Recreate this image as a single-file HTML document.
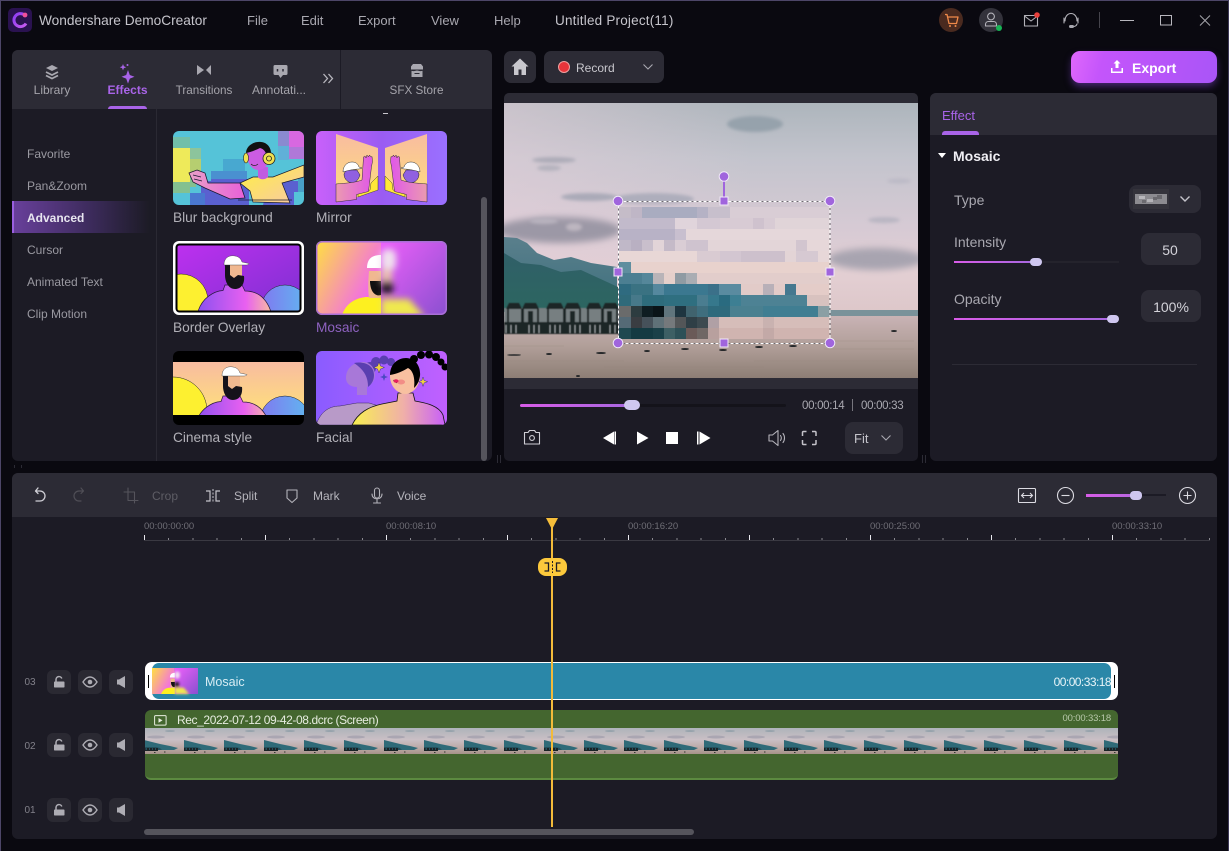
<!DOCTYPE html>
<html><head><meta charset="utf-8"><title>Wondershare DemoCreator</title>
<style>
html,body{margin:0;padding:0;background:#0a0910;}
#app{position:relative;width:1229px;height:851px;overflow:hidden;background:#0a0910;font-family:"Liberation Sans","Noto Sans CJK SC",sans-serif;color:#b5b4bb;}
.b{position:absolute;box-sizing:border-box;}
.t{position:absolute;white-space:nowrap;line-height:16px;height:16px;}
.c{transform:translateX(-50%);}
.r{transform:translateX(-100%);}
svg{position:absolute;overflow:visible;display:block;}
.ic{fill:none;stroke:#b4b3ba;stroke-width:1.100;stroke-linecap:round;stroke-linejoin:round;}
.tb{position:absolute;width:24px;height:24px;border-radius:6px;background:#2a2932;}
</style></head><body><div id="app">

<!-- window edge -->
<div class="b" style="left:0;top:0;width:1229px;height:1px;background:#4d4668"></div>
<div class="b" style="left:0;top:0;width:1px;height:851px;background:#4d4668"></div>
<div class="b" style="left:1228px;top:0;width:1px;height:851px;background:#3d3858"></div>

<!-- title bar -->
<svg style="left:8px;top:8px" width="24" height="24" viewBox="0 0 24 24">
<defs><linearGradient id="lg" x1="0" y1="0" x2="1" y2="1"><stop offset="0" stop-color="#8a3cf0"/><stop offset="1" stop-color="#c85cf0"/></linearGradient></defs>
<rect width="24" height="24" rx="5" fill="#2a1250"/>
<path d="M16.500 7A6.500 6.500 0 1 0 18 15.500" fill="none" stroke="url(#lg)" stroke-width="3"/>
<circle cx="17" cy="7" r="2.400" fill="#f0509a"/></svg>
<div class="t" style="left:39px;top:13px;font-size:13.700px;color:#c6c5cc">Wondershare DemoCreator</div>
<div class="t" style="left:247px;top:13px;font-size:13px;color:#a9a8b0">File</div>
<div class="t" style="left:301px;top:13px;font-size:13px;color:#a9a8b0">Edit</div>
<div class="t" style="left:358px;top:13px;font-size:13px;color:#a9a8b0">Export</div>
<div class="t" style="left:431px;top:13px;font-size:13px;color:#a9a8b0">View</div>
<div class="t" style="left:494px;top:13px;font-size:13px;color:#a9a8b0">Help</div>
<div class="t" style="left:555px;top:13px;font-size:13.500px;letter-spacing:.2px;color:#c6c5cc">Untitled Project(11)</div>

<svg style="left:0;top:0" width="1229" height="40">
<circle cx="951" cy="20" r="12" fill="#4a2a1f"/>
<path d="M945 14.500h2l2 9h7.500l1.500-6.500h-10" fill="none" stroke="#f08a4a" stroke-width="1.300" stroke-linejoin="round"/><circle cx="950" cy="26" r="1" fill="#f08a4a"/><circle cx="955.500" cy="26" r="1" fill="#f08a4a"/>
<circle cx="991" cy="20" r="12" fill="#33323b"/>
<circle cx="991" cy="16.500" r="3.400" class="ic"/><path d="M985.500 26v-1.500c0-2 1.500-3 3-3h5c1.500 0 3 1 3 3V26z" class="ic"/>
<circle cx="999" cy="28" r="3" fill="#17b455"/>
<path d="M1024.500 15.500h13v10.500h-13zM1024.500 16l6.500 5 6.500-5" class="ic"/><circle cx="1037" cy="15" r="2.800" fill="#e8403c"/>
<path d="M1065 21c0-10 12-10 12 0M1064 18v5M1078 18v5M1077 24c-.5 2-2 2.500-4 2.500" class="ic"/><rect x="1069" y="25" width="5" height="3" rx="1.500" fill="#a9a8b0"/>
<path d="M1099.500 12v16" stroke="#45444c"/>
<path d="M1120 20.500h14" stroke="#b8b7be" stroke-width="1"/>
<rect x="1160.500" y="15.500" width="11" height="9.500" fill="none" stroke="#b8b7be"/>
<path d="M1200 15.500l10 10M1210 15.500l-10 10" stroke="#a5a4ab" stroke-width="1"/>
</svg>

<!-- left panel -->
<div class="b" style="left:12px;top:50px;width:480px;height:411px;background:#1c1b25;border-radius:6px;overflow:hidden">
 <div class="b" style="left:0;top:0;width:480px;height:59px;background:#2c2b35"></div>
 <div class="b" style="left:328px;top:0;width:1px;height:59px;background:#1c1b25"></div>
 <div class="b" style="left:144px;top:59px;width:1px;height:352px;background:#2a2933"></div>
 <div class="b" style="left:0;top:151px;width:138px;height:32px;background:linear-gradient(90deg,#69409c,#3a2a58 60%,#1c1b25)"></div>
 <div class="b" style="left:0;top:151px;width:2px;height:32px;background:#9a5fe0"></div>
 <div class="b" style="left:96px;top:56px;width:39px;height:3px;border-radius:3px 3px 0 0;background:#a964e8"></div>
 <div class="b" style="left:469px;top:147px;width:6px;height:264px;border-radius:3px;background:#55545c"></div>
</div>
<svg style="left:0;top:50px" width="500" height="60">
<path d="M46 18l6-3 6 3-6 3z" fill="#a9a8b0"/><path d="M46 22l6 3 6-3M46 25.500l6 3 6-3" fill="none" stroke="#a9a8b0" stroke-width="1.800"/>
<path d="M128 20l1.800 5 4.700 1.800-4.700 1.800-1.800 5-1.800-5-4.700-1.800 4.700-1.800z" fill="#a964e8"/><path d="M123 14l.9 2.300 2.300.9-2.300.9-.9 2.300-.9-2.300-2.300-.9 2.300-.9z" fill="#a964e8"/><circle cx="127.500" cy="15" r="1" fill="#a964e8"/>
<path d="M197 15l7 5-7 5z" fill="#a9a8b0"/><path d="M211 15l-5 5 5 5z" fill="#a9a8b0"/>
<path d="M275 15h11a1.500 1.500 0 0 1 1.500 1.500v7a1.500 1.500 0 0 1-1.500 1.500h-3l-2.500 3-2-3h-3.500a1.500 1.500 0 0 1-1.500-1.500v-7a1.500 1.500 0 0 1 1.500-1.500z" fill="#a9a8b0"/><path d="M277.500 19v2.500M283 19v2.500" stroke="#2c2b35" stroke-width="1.500"/>
<path d="M323.500 24l4 4.500-4 4.500M328.500 24l4 4.500-4 4.500" fill="none" stroke="#b8b7be" stroke-width="1.300"/>
<path d="M411 16.500l2-2.500h8l2 2.500v3h-12zM411.500 20.500h11V27h-11z" fill="#a9a8b0"/><path d="M411 20c2 1.500 4 0 6 0s4 1.500 6 0M414.500 23.500h5" stroke="#2c2b35" stroke-width="1" fill="none"/>
</svg>
<div class="t c" style="left:52px;top:82px;font-size:12px;color:#a5a4ab">Library</div>
<div class="t c" style="left:127.500px;top:82px;font-size:12px;font-weight:700;color:#a964e8">Effects</div>
<div class="t c" style="left:204px;top:83px;font-size:11.700px;color:#a5a4ab">Transitions</div>
<div class="t c" style="left:279px;top:82px;font-size:12px;color:#a5a4ab">Annotati...</div>
<div class="t c" style="left:416.500px;top:83px;font-size:11.700px;color:#a5a4ab">SFX Store</div>

<div class="t" style="left:27px;top:146px;font-size:12px;color:#9a99a1">Favorite</div>
<div class="t" style="left:27px;top:178px;font-size:12px;color:#9a99a1">Pan&amp;Zoom</div>
<div class="t" style="left:27px;top:210px;font-size:12px;font-weight:700;color:#e8e6f0">Advanced</div>
<div class="t" style="left:27px;top:242px;font-size:12px;color:#9a99a1">Cursor</div>
<div class="t" style="left:27px;top:274px;font-size:12px;color:#9a99a1">Animated Text</div>
<div class="t" style="left:27px;top:306px;font-size:12px;color:#9a99a1">Clip Motion</div>
<div class="b" style="left:383px;top:113px;width:5px;height:1px;background:#c8c7ce"></div>

<!-- effect cards -->
<svg style="left:173px;top:131px" width="131" height="74" viewBox="0 0 131 74">
<defs>
<clipPath id="cp"><rect width="131" height="74" rx="6"/></clipPath>
<linearGradient id="arm1" x1="0" y1="0" x2="1" y2="0"><stop offset="0" stop-color="#e8a0c8"/><stop offset="1" stop-color="#e860d8"/></linearGradient>
<linearGradient id="shirt" x1="0" y1="0" x2="1" y2="1"><stop offset="0" stop-color="#fff040"/><stop offset="1" stop-color="#f8c8a8"/></linearGradient>
<linearGradient id="mir" x1="0" y1="0" x2="1" y2="0"><stop offset="0" stop-color="#c860fa"/><stop offset=".5" stop-color="#9a5cf2"/><stop offset="1" stop-color="#9a70ff"/></linearGradient>
<linearGradient id="peach" x1="0" y1="0" x2="0" y2="1"><stop offset="0" stop-color="#f8bca0"/><stop offset="1" stop-color="#ffe07a"/></linearGradient>
<linearGradient id="armm" x1="0" y1="0" x2="1" y2="0"><stop offset="0" stop-color="#eb9ab0"/><stop offset="1" stop-color="#e058e8"/></linearGradient>
<linearGradient id="bord" x1="0" y1="0" x2="1" y2="1"><stop offset="0" stop-color="#c030f0"/><stop offset="1" stop-color="#7a30d0"/></linearGradient>
<linearGradient id="torso" x1="0" y1="0" x2="1" y2="0"><stop offset="0" stop-color="#8a50f0"/><stop offset=".65" stop-color="#e860f0"/><stop offset="1" stop-color="#f8c0a0"/></linearGradient>
<linearGradient id="blue" x1="0" y1="0" x2="1" y2="0"><stop offset="0" stop-color="#8078f0"/><stop offset="1" stop-color="#60b8f0"/></linearGradient>
<linearGradient id="mosL" x1="0" y1="0" x2="1" y2=".6"><stop offset="0" stop-color="#ffe040"/><stop offset="1" stop-color="#f060f8"/></linearGradient>
<linearGradient id="mosR" x1="0" y1="0" x2="1" y2="1"><stop offset="0" stop-color="#ee60fa"/><stop offset="1" stop-color="#8a50d0"/></linearGradient>
<linearGradient id="fac" x1="0" y1="0" x2="1" y2="0"><stop offset="0" stop-color="#8a5cff"/><stop offset="1" stop-color="#c060ff"/></linearGradient>
<linearGradient id="facb" x1="0" y1="0" x2="1" y2="0"><stop offset="0" stop-color="#f8f050"/><stop offset=".55" stop-color="#f0b0a8"/><stop offset="1" stop-color="#c860f8"/></linearGradient>
<filter id="bl3" x="-40%" y="-40%" width="180%" height="180%"><feGaussianBlur stdDeviation="3.500"/></filter>
<filter id="bl5" x="-40%" y="-80%" width="180%" height="260%"><feGaussianBlur stdDeviation="4"/></filter>
<filter id="bl2" x="-30%" y="-60%" width="160%" height="220%"><feGaussianBlur stdDeviation="1.500"/></filter>
<filter id="bl0" x="-5%" y="-5%" width="110%" height="110%"><feGaussianBlur stdDeviation=".45"/></filter>
<g id="man"><path d="M24 74C28 56 42 50 50 49.500L52 44h17l3 6c12 0 22 6 27 24z" fill="url(#torso)" stroke="#2a1a40" stroke-width=".7"/>
<path d="M53 24h16v14c0 8-12 9-14 5z" fill="#f0b890"/><path d="M52 24h5v10l4 3 4-3 6 1c1 8-3 13-9 13-7 0-10-8-10-14z" fill="#15121a"/>
<path d="M51 24c0-8 6-10 11-9 4 .6 6 3 7 6l7 1.500c0 1-2 1.500-3 1.500z" fill="#fff" stroke="#333" stroke-width=".4"/></g>
</defs>
<g clip-path="url(#cp)"><rect width="131" height="74" fill="#55c3d8"/>
<rect y="6" width="17" height="11" fill="#72bfa8"/><rect y="17" width="17" height="34" fill="#eeea5a"/><rect y="51" width="17" height="11" fill="#84c090"/>
<rect x="17" y="17" width="11" height="11" fill="#8cc49c"/><rect x="17" y="28" width="11" height="17" fill="#b6ce70"/><rect x="17" y="45" width="6" height="11" fill="#84c090"/>
<rect x="105" width="11" height="15" fill="#8a8ad0"/><rect x="116" width="15" height="16" fill="#d868e0"/><rect x="116" y="16" width="15" height="12" fill="#b078d8"/><rect x="105" y="15" width="11" height="14" fill="#60b0d8"/>
<rect x="50" y="28" width="22" height="12" fill="#48a8d0"/><rect x="38" y="40" width="36" height="12" fill="#4a90d0"/>
<path d="M28 62V50h10v-2h38v26H17V62zM96 50h35v11h-10v13H90z" fill="#5a60d0"/><rect x="17" y="62" width="15" height="12" fill="#4a78d0"/><rect x="125" y="46" width="6" height="15" fill="#48a0c8"/>
<path d="M24 39l8 3 3 10h32l5 15-15 1-25-11-12-6-4-9z" fill="url(#arm1)" stroke="#1a1a30" stroke-width=".8"/>
<path d="M20 44l8 2M21 48l8 2" stroke="#1a1a30" stroke-width=".7"/>
<path d="M67 52l13-6h20l31-12v12l-22 6 8 20-37-1-3-11z" fill="url(#shirt)" stroke="#1a1a30" stroke-width=".7"/>
<path d="M85 36h10v10c-3 3-8 3-10 0z" fill="#c05ce0"/>
<path d="M74 24c0-7 5-11 11-11 7 0 11 5 11 12 0 8-4 14-11 14-6 0-11-7-11-15z" fill="#cc5ce2"/>
<path d="M73 22c0-7 8-12 15-11 7 .5 11 7 10 14l-4 1c-1-5-3-8-7-9-4 2-9 4-14 5z" fill="#111"/>
<ellipse cx="73" cy="27" rx="2.500" ry="5" fill="#f0e050" stroke="#222" stroke-width=".6"/>
<circle cx="96" cy="27.500" r="6" fill="#f0e050" stroke="#222" stroke-width=".8"/><circle cx="96" cy="27.500" r="2.500" fill="none" stroke="#222" stroke-width=".8"/>
<path d="M78 33c2 2 5 2 7 0" stroke="#222" stroke-width=".7" fill="none"/><path d="M65 69h54" stroke="#1a1a30" stroke-width=".7"/></g></svg>

<svg style="left:316px;top:131px" width="131" height="74" viewBox="0 0 131 74"><g clip-path="url(#cp)"><rect width="131" height="74" fill="url(#mir)"/>
<g id="mh"><path d="M20 3l42 14v42L42 66 20 71z" fill="url(#peach)"/>
<path d="M28 43c0 6 5 9 9 9 4-1 6-5 7-8l-3-5H30z" fill="#9060e0" stroke="#222" stroke-width=".5"/>
<path d="M27 41c0-6 4-10 9-10 4 0 6 2 7 5l3 1-3 1c-3 0-10 1-16 3z" fill="#fff" stroke="#333" stroke-width=".5"/>
<path d="M42 62l12-3 1-7 7-7v14L42 66z" fill="#ffe838" stroke="#222" stroke-width=".4"/>
<path d="M20 53c10-1 18-1 26-4l1-15 .5-8 1.500-1 1 2 1-3 1.500 2 1-2 1.500 2 1-.5 .5 5-1 5-3 25-12 3v5L20 71z" fill="url(#armm)" stroke="#222" stroke-width=".45"/></g>
<use href="#mh" transform="matrix(-1 0 0 1 131 0)"/></g></svg>

<svg style="left:173px;top:241px" width="131" height="74" viewBox="0 0 131 74"><rect width="131" height="74" rx="6" fill="#fff"/><rect x="2.500" y="2.500" width="126" height="69" rx="4" fill="#000"/>
<g><clipPath id="cb"><rect x="4.500" y="4.500" width="122" height="65" rx="2"/></clipPath><g clip-path="url(#cb)"><rect width="131" height="74" fill="url(#bord)"/>
<circle cx="8" cy="60" r="27" fill="#fdf030" stroke="#222" stroke-width=".5"/><circle cx="112" cy="68" r="24" fill="url(#blue)" stroke="#222" stroke-width=".5"/><use href="#man"/></g></g></svg>

<svg style="left:316px;top:241px" width="131" height="74" viewBox="0 0 131 74"><g clip-path="url(#cp)"><rect width="65" height="74" fill="url(#mosL)"/><rect x="65" width="66" height="74" fill="url(#mosR)"/>
<clipPath id="cl"><rect width="65" height="74"/></clipPath>
<g clip-path="url(#cl)"><path d="M26 74c4-12 14-17 24-18h15v18z" fill="#fdf020"/><path d="M53 30h12v27H53c-1-6-1-16 0-27z" fill="#f0b890"/><path d="M54 40h11v14c-6 2-11-4-11-14z" fill="#111"/><path d="M51 27c0-10 6-13 14-13v13z" fill="#fff"/></g>
<g filter="url(#bl3)"><rect x="65" y="8" width="15" height="22" rx="7" fill="#f0e0ee"/><rect x="65" y="28" width="11" height="12" fill="#e8c0b0"/><rect x="65" y="40" width="12" height="13" fill="#2a1a28"/><path d="M65 58h28l16 18H65z" fill="#efe850"/></g>
<rect x=".7" y=".7" width="129.600" height="72.600" rx="5.500" fill="none" stroke="#a96fd6" stroke-width="1.500"/></g></svg>

<svg style="left:173px;top:351px" width="131" height="74" viewBox="0 0 131 74"><g clip-path="url(#cp)"><rect width="131" height="74" fill="#000"/>
<clipPath id="cc"><rect y="11" width="131" height="53"/></clipPath><g clip-path="url(#cc)"><rect y="11" width="131" height="53" fill="url(#peach)"/>
<circle cx="0" cy="60" r="34" fill="#fdf030" stroke="#222" stroke-width=".5"/><circle cx="112" cy="70" r="25" fill="url(#blue)" stroke="#222" stroke-width=".5"/><use href="#man" x="-2" y="1"/></g></g></svg>

<svg style="left:316px;top:351px" width="131" height="74" viewBox="0 0 131 74"><g clip-path="url(#cp)"><rect width="131" height="74" fill="url(#fac)"/>
<circle cx="60" cy="11" r="5" fill="#5a3fb0"/><circle cx="68" cy="9" r="4.500" fill="#5a3fb0"/><circle cx="75" cy="11" r="4" fill="#5a3fb0"/><circle cx="54" cy="17" r="6" fill="#5a3fb0"/>
<path d="M30 27c0-10 8-16 17-16 7 0 12 6 12 13 0 6-4 10-8 12v8H41v-8c-6 0-11-3-11-9z" fill="#a878d8"/><path d="M38 12c10-2 20 2 20 12 0 5-2 9-6 12 0-8-2-16-14-24z" fill="#5a3fb0"/>
<path d="M0 74c4-12 12-19 24-19l17-3h12l10 3-20 19z" fill="#b89ac8" stroke="#3a2a60" stroke-width=".5"/>
<circle cx="98" cy="8" r="4" fill="#000"/><circle cx="105" cy="4" r="4" fill="#000"/><circle cx="113" cy="3.500" r="4" fill="#000"/><circle cx="120" cy="6" r="4" fill="#000"/><circle cx="125" cy="11" r="3.500" fill="#000"/><circle cx="129" cy="16" r="3.500" fill="#000"/>
<path d="M36 74c6-12 16-18 30-21l15-3 1-8h15l2 8c12 2 24 5 28 14l2 10z" fill="url(#facb)" stroke="#111" stroke-width=".8"/>
<path d="M74 25c0-10 6-17 14-17 9 0 16 7 16 17 0 9-6 17-14 18-9 0-16-8-16-18z" fill="#f8c0a0"/><path d="M74 24c0-11 8-17 16-17 9 0 15 8 14 18-1 6-3 9-6 12 1-8 0-17-6-20-5 3-11 6-18 7z" fill="#000"/>
<ellipse cx="85" cy="31" rx="4" ry="2.500" fill="#f08080" opacity=".8"/><path d="M77 29l3 2M79 31l2 1" stroke="#111" stroke-width=".5"/><ellipse cx="80" cy="30" rx="2.500" ry="1.800" fill="#e82060"/>
<path d="M63 11l1.500 4 4 1.500-4 1.500-1.500 4-1.500-4-4-1.500 4-1.500z" fill="#f0d040" stroke="#3a2a90" stroke-width=".5"/><path d="M68 22l1 3 3 1-3 1-1 3-1-3-3-1 3-1z" fill="#4a48c0"/><path d="M107 26l1.200 3.500 3.500 1.200-3.500 1.200-1.200 3.500-1.200-3.500-3.500-1.200 3.500-1.200z" fill="#f0d040" stroke="#3a2a90" stroke-width=".5"/>
</g></svg>

<div class="t" style="left:173px;top:210px;font-size:13.700px;color:#b1b0b7">Blur background</div>
<div class="t" style="left:316px;top:210px;font-size:13.700px;color:#b1b0b7">Mirror</div>
<div class="t" style="left:173px;top:320px;font-size:13.700px;color:#b1b0b7">Border Overlay</div>
<div class="t" style="left:316px;top:320px;font-size:13.700px;color:#8e62c0">Mosaic</div>
<div class="t" style="left:173px;top:430px;font-size:13.700px;color:#b1b0b7">Cinema style</div>
<div class="t" style="left:316px;top:430px;font-size:13.700px;color:#b1b0b7">Facial</div>

<!-- top mid buttons -->
<div class="b" style="left:504px;top:51px;width:32px;height:32px;border-radius:7px;background:#2c2b35"></div>
<svg style="left:504px;top:51px" width="32" height="32"><path d="M16 7.500L7.500 15.500H10V24h4.500v-5.500h3V24H22v-8.500h2.500z" fill="#c8c7cd"/></svg>
<div class="b" style="left:544px;top:51px;width:120px;height:32px;border-radius:7px;background:#2c2b35"></div>
<div class="b" style="left:558px;top:61px;width:12px;height:12px;border-radius:50%;background:#e8343a;border:1.500px solid #f0a0a0"></div>
<div class="t" style="left:576px;top:60px;font-size:12px;color:#c8c7cd">Record</div>
<svg style="left:643px;top:64px" width="10" height="6"><path d="M.5.500L5 5 9.500.5" fill="none" stroke="#a9a8b0" stroke-width="1.100"/></svg>

<!-- export -->
<div class="b" style="left:1071px;top:51px;width:146px;height:32px;border-radius:9px;background:linear-gradient(105deg,#df68fb,#c455fb 22%,#a955f7);box-shadow:0 4px 8px -1px rgba(130,70,210,.55)"></div>
<svg style="left:1110px;top:59px" width="14" height="16"><path d="M7 1L3.500 4.500H5.500V10h3V4.500h2zM1 9v5h12V9" fill="#fff"/><path d="M2.500 9v3.500h9V9" fill="#c254fb"/></svg>
<div class="t" style="left:1132px;top:60px;font-size:14px;font-weight:700;color:#fff">Export</div>

<!-- preview -->
<div class="b" style="left:504px;top:93px;width:414px;height:368px;border-radius:5px;background:#1c1b25;overflow:hidden">
 <div class="b" style="left:0;top:0;width:414px;height:10px;background:#2c2b35"></div>
 <div class="b" style="left:0;top:285px;width:414px;height:11px;background:#2c2b35"></div>
</div>
<svg style="left:504px;top:103px" width="414" height="275" viewBox="0 0 414 275">
<defs>
<linearGradient id="sky" x1="0" y1="0" x2="0" y2="1"><stop offset="0" stop-color="#adb5bc"/><stop offset=".2" stop-color="#c3c4cd"/><stop offset=".45" stop-color="#d6cad4"/><stop offset=".62" stop-color="#e3cfd3"/><stop offset=".78" stop-color="#dcc6c8"/><stop offset="1" stop-color="#dcc6c8"/></linearGradient>
<linearGradient id="skyl" x1="0" y1="0" x2="1" y2="0"><stop offset="0" stop-color="#e6d0da" stop-opacity=".5"/><stop offset=".6" stop-color="#e6d0da" stop-opacity="0"/></linearGradient>
<linearGradient id="wat" x1="0" y1="0" x2="0" y2="1"><stop offset="0" stop-color="#c9b3b5"/><stop offset=".5" stop-color="#b09e98"/><stop offset="1" stop-color="#8d7e75"/></linearGradient>
<linearGradient id="mt" x1="0" y1="0" x2="0" y2="1"><stop offset="0" stop-color="#5a7f8c"/><stop offset="1" stop-color="#3c6f7c"/></linearGradient>
<linearGradient id="mt2" x1="0" y1="0" x2="0" y2="1"><stop offset="0" stop-color="#305f68"/><stop offset="1" stop-color="#2c6660"/></linearGradient>
<clipPath id="ph"><rect width="414" height="275"/></clipPath></defs>
<g clip-path="url(#ph)"><rect width="414" height="275" fill="url(#sky)"/><rect width="414" height="200" fill="url(#skyl)"/>
<ellipse cx="251" cy="21" rx="28" ry="8" fill="#96a2ac" filter="url(#bl2)"/>
<ellipse cx="50" cy="57" rx="22" ry="3" fill="#adacb8" filter="url(#bl2)"/><ellipse cx="45" cy="65" rx="12" ry="3" fill="#b5b3be" filter="url(#bl2)"/>
<ellipse cx="85" cy="94" rx="28" ry="4" fill="#aaaab8" filter="url(#bl2)"/><ellipse cx="150" cy="96" rx="40" ry="6" fill="#aeaebc" filter="url(#bl2)"/>
<ellipse cx="55" cy="127" rx="62" ry="13" fill="#9c98a6" filter="url(#bl3)"/><ellipse cx="40" cy="118" rx="14" ry="3" fill="#b8b2be" filter="url(#bl2)"/><ellipse cx="70" cy="124" rx="8" ry="4" fill="#bdb6c0" filter="url(#bl2)"/>
<ellipse cx="380" cy="117" rx="16" ry="3" fill="#b9b6c2" filter="url(#bl2)"/><ellipse cx="372" cy="156" rx="48" ry="11" fill="#a8a4b0" filter="url(#bl3)"/><ellipse cx="395" cy="78" rx="12" ry="2.500" fill="#bcbac6" filter="url(#bl2)"/>
<path d="M0 134l13 1 10 5 10 10 17 7 17-3 20 6 26 4v45H0z" fill="url(#mt)"/>
<path d="M0 150l17 10 20 2 20 7 20-2 37 17v24H0z" fill="url(#mt2)"/>
<path d="M320 207h94v6h-94z" fill="#7a929a"/>
<rect y="213" width="414" height="62" fill="url(#wat)"/>
<g filter="url(#bl0)">
<rect y="205" width="115" height="14" fill="#777f81"/>
<g fill="#1c2628"><path d="M2 206l3-6h10l3 6zM18 206l3-6h11l3 6zM42 206l3-6h12l3 6zM60 206l3-6h11l3 6zM82 206l3-6h10l3 6zM98 206l3-6h11l3 6z"/>
<rect y="219" width="115" height="12"/><rect x="3" y="206" width="2" height="13"/><rect x="17" y="206" width="3" height="13"/><rect x="33" y="206" width="2" height="13"/><rect x="43" y="206" width="2" height="13"/><rect x="59" y="206" width="3" height="13"/><rect x="75" y="206" width="2" height="13"/><rect x="83" y="206" width="2" height="13"/><rect x="97" y="206" width="3" height="13"/><rect x="112" y="206" width="2" height="13"/><rect x="24" y="208" width="5" height="11"/><rect x="66" y="208" width="5" height="11"/><rect x="103" y="208" width="5" height="11"/></g>
<g stroke="#9a9fa2" stroke-width="1"><path d="M2 222v8M7 222v8M12 222v8M25 222v8M30 222v8M35 222v8M46 222v8M51 222v8M56 222v8M66 222v8M71 222v8M76 222v8M86 222v8M91 222v8M96 222v8M106 222v8M111 222v8"/></g>
</g>
<g fill="#26282a"><ellipse cx="10" cy="252" rx="7" ry=".8"/><ellipse cx="45" cy="251" rx="3" ry="1"/><ellipse cx="97" cy="250" rx="5" ry="1"/><ellipse cx="143" cy="248" rx="3" ry="1"/><ellipse cx="181" cy="246" rx="4" ry="1"/><ellipse cx="219" cy="247" rx="4" ry="1"/><ellipse cx="255" cy="244" rx="4" ry="1"/><ellipse cx="289" cy="243" rx="4" ry="1"/><ellipse cx="390" cy="228" rx="3" ry="1"/><ellipse cx="74" cy="273" rx="2" ry="1"/></g>
<g stroke="#8f8279" stroke-width=".6" opacity=".5"><path d="M0 258h120M100 264h160M250 258h164M310 238h100M320 246h90M0 243h60"/></g>
</g></svg>

<!-- mosaic -->
<svg style="left:0;top:0;pointer-events:none" width="1229" height="851" shape-rendering="crispEdges">
<g id="m">
<rect x="618" y="201" width="212" height="6" fill="#d3c7d2" opacity=".35"/>
<rect x="618" y="207" width="13" height="11" fill="#c5bcc8"/><rect x="631" y="207" width="11" height="11" fill="#bfb6c6"/><rect x="642" y="207" width="55" height="11" fill="#a9acc0"/><rect x="697" y="207" width="11" height="11" fill="#b5b2c5"/><rect x="708" y="207" width="22" height="11" fill="#c7bfcc"/><rect x="730" y="207" width="100" height="11" fill="#d9cdd5"/>
<rect x="618" y="218" width="57" height="11" fill="#c2bacb"/><rect x="675" y="218" width="22" height="11" fill="#e0d4db"/><rect x="697" y="218" width="23" height="11" fill="#d4c8d3"/><rect x="720" y="218" width="33" height="11" fill="#d8cbd4"/><rect x="753" y="218" width="11" height="11" fill="#cfc2ce"/><rect x="764" y="218" width="11" height="11" fill="#d8cbd4"/><rect x="775" y="218" width="55" height="11" fill="#e0d4d8"/>
<rect x="618" y="229" width="57" height="11" fill="#b8b2c6"/><rect x="675" y="229" width="11" height="11" fill="#c8bfcf"/><rect x="686" y="229" width="144" height="11" fill="#e5d7da"/>
<rect x="618" y="240" width="13" height="11" fill="#c0b8c8"/><rect x="631" y="240" width="11" height="11" fill="#b9b0c2"/><rect x="642" y="240" width="11" height="11" fill="#c9bfcc"/><rect x="653" y="240" width="11" height="11" fill="#e2d4d8"/><rect x="664" y="240" width="11" height="11" fill="#c5bac8"/><rect x="675" y="240" width="11" height="11" fill="#dacdd5"/><rect x="686" y="240" width="22" height="11" fill="#cfc3cf"/><rect x="708" y="240" width="88" height="11" fill="#e3d5d8"/><rect x="796" y="240" width="11" height="11" fill="#d2c5cf"/><rect x="807" y="240" width="23" height="11" fill="#e6d7d9"/>
<rect x="618" y="251" width="79" height="11" fill="#e8d7d6"/><rect x="697" y="251" width="23" height="11" fill="#d9cbd2"/><rect x="720" y="251" width="21" height="11" fill="#d3c6d1"/><rect x="741" y="251" width="44" height="11" fill="#cdc0cc"/><rect x="785" y="251" width="11" height="11" fill="#e3d4d6"/><rect x="796" y="251" width="22" height="11" fill="#d6c9d2"/><rect x="818" y="251" width="12" height="11" fill="#e7d7d8"/>
<rect x="618" y="262" width="13" height="11" fill="#5f8e9f"/><rect x="631" y="262" width="199" height="11" fill="#e8d2cd"/>
<rect x="618" y="273" width="24" height="11" fill="#4c7f92"/><rect x="642" y="273" width="11" height="11" fill="#55879a"/><rect x="653" y="273" width="11" height="11" fill="#b9b4b8"/><rect x="664" y="273" width="11" height="11" fill="#e5d0cb"/><rect x="675" y="273" width="11" height="11" fill="#8f9ba3"/><rect x="686" y="273" width="11" height="11" fill="#a9adb3"/><rect x="697" y="273" width="133" height="11" fill="#e2cdcb"/>
<rect x="618" y="284" width="13" height="11" fill="#2f6b80"/><rect x="631" y="284" width="22" height="11" fill="#3a7282"/><rect x="653" y="284" width="11" height="11" fill="#55889e"/><rect x="664" y="284" width="44" height="11" fill="#3b7890"/><rect x="708" y="284" width="11" height="11" fill="#3b7089"/><rect x="719" y="284" width="22" height="11" fill="#5a8ba0"/><rect x="741" y="284" width="22" height="11" fill="#e2cbc8"/><rect x="763" y="284" width="11" height="11" fill="#b8b0b8"/><rect x="774" y="284" width="11" height="11" fill="#e2cbc8"/><rect x="785" y="284" width="11" height="11" fill="#45788f"/><rect x="796" y="284" width="34" height="11" fill="#e4ccc8"/>
<rect x="618" y="295" width="13" height="11" fill="#2f6a7a"/><rect x="631" y="295" width="11" height="11" fill="#47798a"/><rect x="642" y="295" width="22" height="11" fill="#2e6c7c"/><rect x="664" y="295" width="33" height="11" fill="#2f6f80"/><rect x="697" y="295" width="11" height="11" fill="#4a7d90"/><rect x="708" y="295" width="11" height="11" fill="#36788c"/><rect x="719" y="295" width="11" height="11" fill="#2a6b80"/><rect x="730" y="295" width="11" height="11" fill="#3d7f93"/><rect x="741" y="295" width="66" height="11" fill="#4d8294"/><rect x="807" y="295" width="23" height="11" fill="#d8c2bf"/>
<rect x="618" y="306" width="13" height="11" fill="#6a6b6b"/><rect x="631" y="306" width="11" height="11" fill="#2d3c40"/><rect x="642" y="306" width="11" height="11" fill="#0f1d22"/><rect x="653" y="306" width="11" height="11" fill="#0a1418"/><rect x="664" y="306" width="11" height="11" fill="#60757d"/><rect x="675" y="306" width="11" height="11" fill="#1e3540"/><rect x="686" y="306" width="11" height="11" fill="#40636e"/><rect x="697" y="306" width="11" height="11" fill="#3f6e7e"/><rect x="708" y="306" width="22" height="11" fill="#2e6a7c"/><rect x="730" y="306" width="33" height="11" fill="#4a8090"/><rect x="763" y="306" width="55" height="11" fill="#407e92"/><rect x="818" y="306" width="12" height="11" fill="#8a9fa4"/>
<rect x="618" y="317" width="13" height="11" fill="#556a76"/><rect x="631" y="317" width="11" height="11" fill="#3a3d42"/><rect x="642" y="317" width="11" height="11" fill="#46515a"/><rect x="653" y="317" width="11" height="11" fill="#5f7178"/><rect x="664" y="317" width="11" height="11" fill="#75797c"/><rect x="675" y="317" width="11" height="11" fill="#535658"/><rect x="686" y="317" width="11" height="11" fill="#2f3f46"/><rect x="697" y="317" width="11" height="11" fill="#3c4a50"/><rect x="708" y="317" width="11" height="11" fill="#b0a0a5"/><rect x="719" y="317" width="44" height="11" fill="#d6bdb9"/><rect x="763" y="317" width="11" height="11" fill="#c9b2b0"/><rect x="774" y="317" width="56" height="11" fill="#d6bdb9"/>
<rect x="618" y="328" width="13" height="11" fill="#1f4850"/><rect x="631" y="328" width="22" height="11" fill="#143a42"/><rect x="653" y="328" width="11" height="11" fill="#1a4048"/><rect x="664" y="328" width="11" height="11" fill="#3d5f64"/><rect x="675" y="328" width="11" height="11" fill="#2d5057"/><rect x="686" y="328" width="11" height="11" fill="#6a5a58"/><rect x="697" y="328" width="11" height="11" fill="#6f6765"/><rect x="708" y="328" width="11" height="11" fill="#b8a09e"/><rect x="719" y="328" width="44" height="11" fill="#d0b4b0"/><rect x="763" y="328" width="11" height="11" fill="#c3a9a7"/><rect x="774" y="328" width="56" height="11" fill="#d0b4b0"/>
</g></svg>
<svg style="left:0;top:0;pointer-events:none" width="1229" height="851">
<rect x="618.500" y="201.500" width="211.500" height="142" fill="none" stroke="#6e6a70" stroke-width="1"/>
<rect x="618.500" y="201.500" width="211.500" height="142" fill="none" stroke="#fff" stroke-width="1" stroke-dasharray="3 2"/>
<path d="M724 181v17" stroke="#a065dd" stroke-width="2"/>
<g fill="#a065dd" stroke="#f0e8f8" stroke-width="1"><circle cx="724" cy="176.500" r="4.800"/><circle cx="618" cy="201" r="4.800"/><circle cx="830" cy="201" r="4.800"/><circle cx="618" cy="343" r="4.800"/><circle cx="830" cy="343" r="4.800"/>
<rect x="720" y="197" width="8" height="8"/><rect x="720" y="339" width="8" height="8"/><rect x="614" y="268" width="8" height="8"/><rect x="826" y="268" width="8" height="8"/></g>
</svg>

<!-- playback -->
<div class="b" style="left:520px;top:404px;width:266px;height:3px;border-radius:2px;background:#14131a"></div>
<div class="b" style="left:520px;top:404px;width:110px;height:3px;border-radius:2px;background:linear-gradient(90deg,#d85ce8,#a868e0)"></div>
<div class="b" style="left:624px;top:400px;width:16px;height:10px;border-radius:5px;background:#cfc7f0"></div>
<div class="t" style="left:802px;top:398px;font-size:11.500px;letter-spacing:-.3px;color:#a9a8b0">00:00:14</div>
<div class="b" style="left:852px;top:399px;width:1px;height:12px;background:#77767e"></div>
<div class="t" style="left:861px;top:398px;font-size:11.500px;letter-spacing:-.3px;color:#a9a8b0">00:00:33</div>
<svg style="left:500px;top:420px" width="340" height="36">
<path d="M24.500 12.500h3.500l1.500-2h5l1.500 2h3.500v11.500h-15z" class="ic" style="stroke:#d0cfd6"/><circle cx="32" cy="18" r="2.400" class="ic" style="stroke:#d0cfd6"/>
<path d="M103 18l11-6.500v13z" fill="#fff"/><rect x="114.500" y="11.500" width="1.500" height="13" fill="#fff"/>
<path d="M137 11.500l11.500 6.500-11.500 6.500z" fill="#fff"/><rect x="166" y="12" width="12" height="12" fill="#fff"/>
<rect x="197" y="11.500" width="1.500" height="13" fill="#fff"/><path d="M199.500 11.500l11 6.500-11 6.500z" fill="#fff"/>
<path d="M269 15v6h3.500l5.500 4.500v-15L272.500 15z" class="ic"/><path d="M280.500 15.500c1 1.500 1 3.500 0 5M283 13.500c2 2.500 2 6.500 0 9" class="ic"/>
<path d="M302.500 16v-3.500a1 1 0 0 1 1-1h3M312 11.500h3a1 1 0 0 1 1 1V16M316 20v3.500a1 1 0 0 1-1 1h-3M306.500 24.500h-3a1 1 0 0 1-1-1V20" fill="none" stroke="#c4c3ca" stroke-width="1.500"/></svg>
<div class="b" style="left:845px;top:422px;width:58px;height:32px;border-radius:8px;background:#2c2b35"></div>
<div class="t" style="left:854px;top:431px;font-size:13px;color:#c4c3ca">Fit</div>
<svg style="left:881px;top:435px" width="10" height="6"><path d="M.5.500L5 5 9.500.5" fill="none" stroke="#a9a8b0" stroke-width="1.100"/></svg>

<!-- right panel -->
<div class="b" style="left:930px;top:93px;width:287px;height:368px;border-radius:6px;background:#1c1b25;overflow:hidden">
 <div class="b" style="left:0;top:0;width:287px;height:42px;background:#2c2b35"></div>
 <div class="b" style="left:12px;top:38px;width:37px;height:4px;border-radius:3px 3px 0 0;background:#a964e8"></div>
</div>
<div class="t" style="left:942px;top:108px;font-size:13px;color:#a964e8">Effect</div>
<svg style="left:938px;top:153px" width="9" height="6"><path d="M0 0h8L4 5z" fill="#fff"/></svg>
<div class="t" style="left:953px;top:148px;font-size:14px;font-weight:700;color:#f0eff4">Mosaic</div>
<div class="t" style="left:954px;top:192px;font-size:14px;color:#a9a8b0">Type</div>
<div class="b" style="left:1129px;top:185px;width:72px;height:28px;border-radius:8px;background:#2c2b35"></div>
<div class="b" style="left:1133px;top:189px;width:36px;height:20px;background:#34333b"></div>
<svg style="left:1135px;top:194px" width="32" height="10" shape-rendering="crispEdges"><rect width="32" height="10" fill="#8c8b90"/><rect x="4" y="2" width="6" height="3" fill="#b8b7bb"/><rect x="12" y="5" width="6" height="3" fill="#b4b3b7"/><rect x="22" y="1" width="5" height="4" fill="#6a696e"/><rect x="7" y="6" width="4" height="3" fill="#6c6b70"/><rect x="18" y="3" width="4" height="3" fill="#69686d"/></svg>
<svg style="left:1180px;top:196px" width="10" height="6"><path d="M.5.500L5 5 9.500.5" fill="none" stroke="#c4c3ca" stroke-width="1.400"/></svg>
<div class="t" style="left:954px;top:234px;font-size:14px;color:#a9a8b0">Intensity</div>
<div class="b" style="left:954px;top:261px;width:165px;height:2px;background:#24232c"></div>
<div class="b" style="left:954px;top:261px;width:78px;height:2px;background:linear-gradient(90deg,#d85ce8,#a868e0)"></div>
<div class="b" style="left:1030px;top:258px;width:12px;height:8px;border-radius:4px;background:#cfc7f0"></div>
<div class="b" style="left:1141px;top:233px;width:60px;height:32px;border-radius:8px;background:#2c2b35"></div>
<div class="t c" style="left:1170px;top:242px;font-size:14px;color:#d4d3da">50</div>
<div class="t" style="left:954px;top:291px;font-size:14px;color:#a9a8b0">Opacity</div>
<div class="b" style="left:954px;top:318px;width:158px;height:2px;background:linear-gradient(90deg,#d85ce8,#a868e0)"></div>
<div class="b" style="left:1107px;top:315px;width:12px;height:8px;border-radius:4px;background:#cfc7f0"></div>
<div class="b" style="left:1141px;top:290px;width:60px;height:32px;border-radius:8px;background:#2c2b35"></div>
<div class="t c" style="left:1171px;top:299px;font-size:14px;color:#d4d3da">100%</div>
<div class="b" style="left:952px;top:364px;width:245px;height:1px;background:#2c2b35"></div>

<!-- grip dots -->
<div class="b" style="left:14px;top:465px;width:8px;height:3px;border-left:1px solid #2c2b35;border-right:1px solid #2c2b35"></div>
<div class="b" style="left:922px;top:455px;width:4px;height:8px;border-left:1px solid #2c2b35;border-right:1px solid #2c2b35"></div>
<div class="b" style="left:497px;top:455px;width:4px;height:8px;border-left:1px solid #2c2b35;border-right:1px solid #2c2b35"></div>

<!-- timeline -->
<div class="b" style="left:12px;top:473px;width:1205px;height:366px;border-radius:6px;background:#1c1b25;overflow:hidden">
 <div class="b" style="left:0;top:0;width:1205px;height:44px;background:#2c2b35"></div>
</div>
<svg style="left:0;top:473px" width="1229" height="46">
<path d="M38 15l-2.500 3 2.500 2.500M36 18h4a5 5 0 0 1 0 10h-4" class="ic" style="stroke:#d0cfd6;stroke-width:1.300"/>
<path d="M81 15l2.500 3-2.500 2.500M83 18h-4a5 5 0 0 0 0 10h2" class="ic" style="stroke:#4f4e56;stroke-width:1.200"/>
<path d="M128 15v12.500h10M124 19h10.500v11" class="ic" style="stroke:#55545c"/>
<path d="M206 18h4v10h-4M220 18h-4v10h4" fill="none" stroke="#c4c3ca" stroke-width="1.200"/><path d="M213 16v14" stroke="#c4c3ca" stroke-width="1" stroke-dasharray="2 1.500"/>
<path d="M287 17h10v8l-5 4.500-5-4.500z" class="ic"/>
<rect x="374.500" y="15" width="5" height="10" rx="2.500" class="ic"/><path d="M372 21c0 6.500 10 6.500 10 0M377 26v4M373.500 30h7" class="ic"/>
<rect x="1018.500" y="15.500" width="17" height="14" rx="1" fill="none" stroke="#dcdbe2" stroke-width="1.100"/><path d="M1022 22.500h10M1024 20l-2.500 2.500 2.500 2.500M1030 20l2.500 2.500-2.500 2.500" fill="none" stroke="#dcdbe2" stroke-width="1.100"/>
<circle cx="1065.500" cy="22.500" r="8" fill="none" stroke="#dcdbe2" stroke-width="1.100"/><path d="M1061.500 22.500h8" stroke="#dcdbe2" stroke-width="1.100"/>
<circle cx="1187.500" cy="22.500" r="8" fill="none" stroke="#dcdbe2" stroke-width="1.100"/><path d="M1183.500 22.500h8M1187.500 18.500v8" stroke="#dcdbe2" stroke-width="1.100"/>
</svg>
<div class="t" style="left:152px;top:488px;font-size:12px;color:#5e5d65">Crop</div>
<div class="t" style="left:234px;top:488px;font-size:12px;color:#b5b4bb">Split</div>
<div class="t" style="left:313px;top:488px;font-size:12px;color:#b5b4bb">Mark</div>
<div class="t" style="left:397px;top:488px;font-size:12px;color:#b5b4bb">Voice</div>
<div class="b" style="left:1086px;top:494px;width:80px;height:2px;background:#1c1b25"></div>
<div class="b" style="left:1086px;top:494px;width:48px;height:2.500px;background:linear-gradient(90deg,#d85ce8,#b868e0)"></div>
<div class="b" style="left:1130px;top:491px;width:12px;height:8.500px;border-radius:4px;background:#cfc7f0"></div>

<!-- ruler -->
<div class="t" style="left:144px;top:519px;font-size:9.500px;color:#6f6e76">00:00:00:00</div>
<div class="t" style="left:386px;top:519px;font-size:9.500px;color:#6f6e76">00:00:08:10</div>
<div class="t" style="left:628px;top:519px;font-size:9.500px;color:#6f6e76">00:00:16:20</div>
<div class="t" style="left:870px;top:519px;font-size:9.500px;color:#6f6e76">00:00:25:00</div>
<div class="t" style="left:1112px;top:519px;font-size:9.500px;color:#6f6e76">00:00:33:10</div>
<div class="b" style="left:144px;top:540px;width:1066px;height:1px;background:#3a3942"></div>
<div class="b" style="left:144px;top:538px;width:1066px;height:2px;background:repeating-linear-gradient(90deg,#8a8990 0,#8a8990 1px,transparent 1px,transparent 24.2px)"></div>
<div class="b" style="left:144px;top:535px;width:970px;height:5px;background:repeating-linear-gradient(90deg,#e8e7ed 0,#e8e7ed 1px,transparent 1px,transparent 121px)"></div>

<!-- track controls -->
<div class="t c" style="left:30px;top:675px;font-size:10px;color:#82818a">03</div>
<div class="t c" style="left:30px;top:739px;font-size:10px;color:#82818a">02</div>
<div class="t c" style="left:30px;top:803px;font-size:10px;color:#82818a">01</div>
<div class="tb" style="left:47px;top:670px"></div><div class="tb" style="left:78px;top:670px"></div><div class="tb" style="left:109px;top:670px"></div>
<div class="tb" style="left:47px;top:733px"></div><div class="tb" style="left:78px;top:733px"></div><div class="tb" style="left:109px;top:733px"></div>
<div class="tb" style="left:47px;top:798px"></div><div class="tb" style="left:78px;top:798px"></div><div class="tb" style="left:109px;top:798px"></div>
<svg style="left:0;top:0" width="140" height="851">
<defs><g id="trk"><rect x="54" y="11.500" width="10.500" height="6" rx=".8" fill="#aeadb4"/><path d="M56 11.500V9.500a3 3 0 0 1 5.800-1" fill="none" stroke="#aeadb4" stroke-width="1.500"/>
<path d="M83 12c2.500-4 5-5 7-5s4.500 1 7 5c-2.500 4-5 5-7 5s-4.500-1-7-5z" fill="none" stroke="#aeadb4" stroke-width="1.400"/><circle cx="90" cy="12" r="2.300" fill="#aeadb4"/>
<path d="M117 9.500h2l6-3.500v12l-6-3.500h-2z" fill="#aeadb4"/></g></defs>
<use href="#trk" y="670"/><use href="#trk" y="733"/><use href="#trk" y="798"/></svg>

<!-- clip 03 -->
<div class="b" style="left:145px;top:662px;width:973px;height:38px;border-radius:7px;background:#fff"></div>
<div class="b" style="left:152px;top:663px;width:959px;height:36px;border-radius:7px;background:#2a87a8"></div>
<div class="b" style="left:148px;top:675px;width:1px;height:13px;background:#000"></div>
<div class="b" style="left:1114px;top:675px;width:1px;height:13px;background:#000"></div>
<svg style="left:152px;top:668px" width="46" height="26" viewBox="0 0 131 74" preserveAspectRatio="none"><rect width="65" height="74" fill="url(#mosL)"/><rect x="65" width="66" height="74" fill="url(#mosR)"/>
<path d="M26 74c4-12 14-17 24-18h15v18z" fill="#fdf020"/><path d="M53 30h12v27H53z" fill="#f0b890"/><path d="M54 40h11v14c-6 2-11-4-11-14z" fill="#111"/><path d="M51 27c0-10 6-13 14-13v13z" fill="#fff"/>
<g filter="url(#bl3)"><rect x="65" y="10" width="14" height="20" rx="7" fill="#f0e0ee"/><rect x="65" y="40" width="12" height="14" fill="#2a1a28"/><path d="M65 56h25l16 18H65z" fill="#efe850"/></g></svg>
<div class="t" style="left:205px;top:674px;font-size:12.500px;color:#d8edf4">Mosaic</div>
<div class="t r" style="left:1111px;top:674px;font-size:12px;letter-spacing:-.55px;color:#e8f4f8">00:00:33:18</div>

<!-- clip 02 -->
<div class="b" style="left:145px;top:710px;width:973px;height:70px;border-radius:6px;background:#44662f;border-bottom:2px solid #5c8a40"></div>
<svg style="left:145px;top:728px" width="973" height="26" viewBox="0 0 973 26">
<defs>
<linearGradient id="fs" x1="0" y1="0" x2="0" y2="1"><stop offset="0" stop-color="#aeb3ba"/><stop offset=".45" stop-color="#cabfc5"/><stop offset=".8" stop-color="#b9a6a2"/><stop offset="1" stop-color="#a59289"/></linearGradient>
<pattern id="film" x="-1" y="0" width="40" height="26" patternUnits="userSpaceOnUse">
<rect width="40" height="26" fill="url(#fs)"/>
<ellipse cx="26" cy="3" rx="5" ry="1" fill="#97a3ac"/><ellipse cx="12" cy="9" rx="9" ry="1.500" fill="#aaa6b2"/>
<path d="M0 12l8 2 8 2 10 2 8 2-4 2H0z" fill="#2f6a78"/>
<path d="M0 19h12l4 1 2 2H0z" fill="#24505c"/>
<path d="M0 20h1.500v2H3v-2h2v2h1v-2h2v2h1v-2h2v2h1v-2h2v3H0z" fill="#1a2226"/>
<rect x="10" y="24" width="1.500" height="1" fill="#333"/><rect x="20" y="23.500" width="1.500" height="1" fill="#333"/>
</pattern></defs>
<rect width="973" height="26" fill="url(#film)"/></svg>
<svg style="left:154px;top:715px" width="13" height="11"><rect x=".6" y=".6" width="11.500" height="9.500" rx="1" fill="none" stroke="#e8eee0" stroke-width="1"/><path d="M4.500 3l4 2.400-4 2.400z" fill="#e8eee0"/></svg>
<div class="t" style="left:177px;top:712px;font-size:12px;letter-spacing:-.4px;color:#e6ecdf">Rec_2022-07-12 09-42-08.dcrc (Screen)</div>
<div class="t r" style="left:1111px;top:711px;font-size:9.500px;letter-spacing:-.15px;color:#b8c8aa">00:00:33:18</div>

<!-- playhead -->
<div class="b" style="left:551px;top:524px;width:2px;height:303px;background:#f3bb3a"></div>
<svg style="left:546px;top:518px" width="12" height="10"><path d="M0 0h12L7 9.500H5z" fill="#f5bd3a"/></svg>
<div class="b" style="left:538px;top:558px;width:29px;height:18px;border-radius:8px;background:#fcc93c"></div>
<svg style="left:538px;top:558px" width="29" height="18"><path d="M6.500 5h4v8h-4M22.500 5h-4v8h4" fill="none" stroke="#1c1b25" stroke-width="1.300"/><path d="M14.500 3v12" stroke="#1c1b25" stroke-width="1" stroke-dasharray="2 1.500"/></svg>

<!-- bottom scrollbar -->
<div class="b" style="left:144px;top:829px;width:550px;height:6px;border-radius:3px;background:#55545c"></div>

</div></body></html>
